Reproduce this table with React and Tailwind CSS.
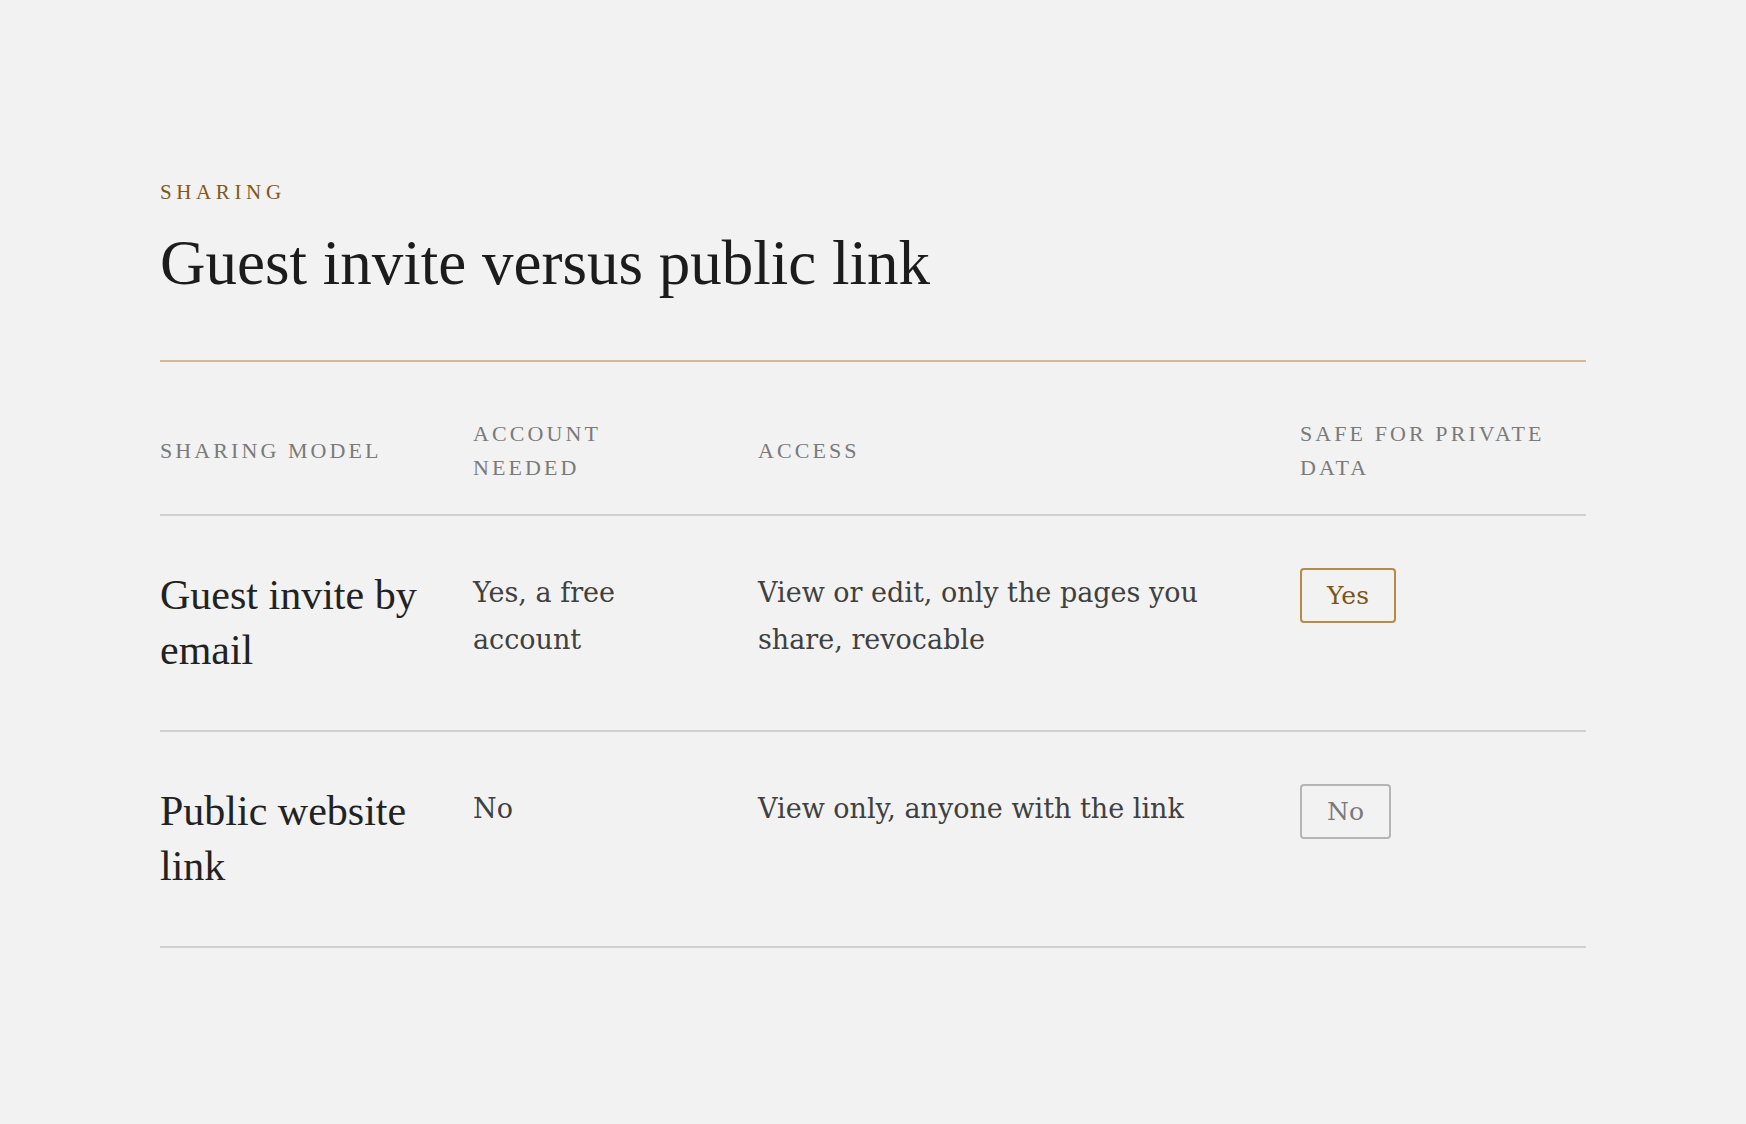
import React from "react";

function Badge({ yes, children }) {
  return (
    <span
      className={
        "inline-block rounded-[4px] border-2 px-[25px] py-[6px] font-['DejaVu_Serif','Liberation_Serif',serif] text-[25px] leading-[39px] " +
        (yes ? "border-[#b98a44] text-[#7a5617]" : "border-[#b5b5b5] text-[#7a7a7a]")
      }
    >
      {children}
    </span>
  );
}

const rows = [
  {
    name: "Guest invite by email",
    account: "Yes, a free account",
    access: "View or edit, only the pages you share, revocable",
    safe: "Yes",
    yes: true,
  },
  {
    name: "Public website link",
    account: "No",
    access: "View only, anyone with the link",
    safe: "No",
    yes: false,
  },
];

const headers = [
  { label: "Sharing model", pad: "pr-14" },
  { label: "Account needed", pad: "pr-14" },
  { label: "Access", pad: "pr-14" },
  { label: "Safe for private data", pad: "pr-0" },
];

export default function App() {
  return (
    <div className="min-h-[1124px] w-full bg-[#f2f2f2] px-[160px] pt-[177px]">
      <div className="border-b-2 border-[#d9b48f] pb-[62px]">
        <div className="font-['Liberation_Serif','Times_New_Roman',serif] text-[21px] uppercase leading-[31.5px] tracking-[0.22em] text-[#80591c]">
          Sharing
        </div>
        <h1 className="mt-[19px] font-['Liberation_Serif','Times_New_Roman',serif] text-[63px] font-normal leading-[70px] text-[#1c1c1c]">
          Guest invite versus public link
        </h1>
      </div>

      <div className="mt-[26px] grid grid-cols-[313px_285px_542px_1fr]">
        {headers.map((h) => (
          <div
            key={h.label}
            className={
              "flex items-center border-b-2 border-[#d0d0d0] py-[29px] font-['Liberation_Serif','Times_New_Roman',serif] text-[22px] uppercase leading-[34px] tracking-[0.14em] text-[#7a7a7a] " +
              h.pad
            }
          >
            <span>{h.label}</span>
          </div>
        ))}

        {rows.map((r) => (
          <React.Fragment key={r.name}>
            <div className="border-b-2 border-[#d0d0d0] pb-[52px] pr-8 pt-[52px] font-['Liberation_Serif','Times_New_Roman',serif] text-[42px] leading-[55px] text-[#222222]">
              {r.name}
            </div>
            <div className="border-b-2 border-[#d0d0d0] pb-[52px] pr-10 pt-[53px] font-['DejaVu_Serif','Liberation_Serif',serif] text-[27px] leading-[47px] text-[#404040]">
              {r.account}
            </div>
            <div className="border-b-2 border-[#d0d0d0] pb-[52px] pr-10 pt-[53px] font-['DejaVu_Serif','Liberation_Serif',serif] text-[27px] leading-[47px] text-[#404040]">
              {r.access}
            </div>
            <div className="border-b-2 border-[#d0d0d0] pb-[52px] pt-[52px]">
              <Badge yes={r.yes}>{r.safe}</Badge>
            </div>
          </React.Fragment>
        ))}
      </div>
    </div>
  );
}
